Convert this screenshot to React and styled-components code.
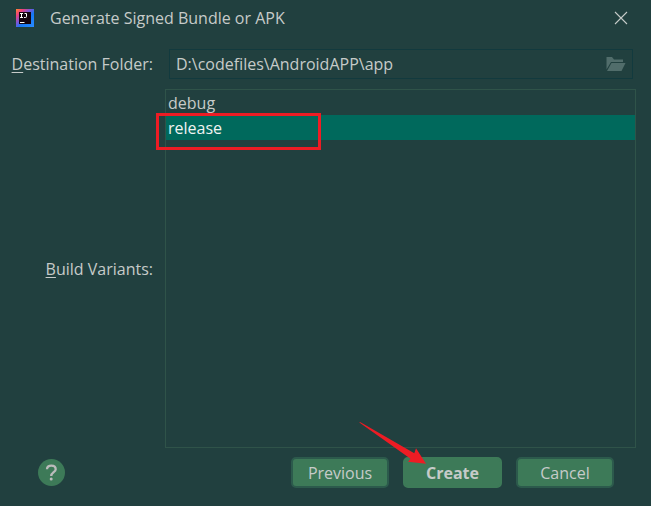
import { useState } from 'react';
import styled, { createGlobalStyle } from 'styled-components';

const GlobalStyle = createGlobalStyle`
	* {
		box-sizing: border-box;
	}

	body {
		margin: 0;
		background: #21403f;
	}

	body, button, input {
		font-family: "Open Sans", "Noto Sans", sans-serif;
		font-size: 16px;
		line-height: 24px;
		color: #c6cbc9;
	}
`;

const Dialog = styled.main`
	display: flex;
	flex-direction: column;
	min-height: 100vh;
`;

const TitleBar = styled.header`
	display: flex;
	align-items: center;
	height: 36px;
	padding: 0 20px 0 16px;

	h1 {
		flex: 1;
		margin: 0 0 0 16px;
		font-size: 16px;
		font-weight: 400;
	}
`;

const IconButton = styled.button`
	display: flex;
	align-items: center;
	justify-content: center;
	padding: 0;
	border: 0;
	background: none;
	cursor: pointer;
`;

const Form = styled.div`
	flex: 1;
	display: grid;
	grid-template-columns: 138px 1fr;
	grid-template-rows: 30px 1fr;
	gap: 10px 12px;
	align-items: center;
	padding: 13px 15px 9px;
`;

const Label = styled.label`
	justify-self: end;
	white-space: nowrap;

	u {
		text-underline-offset: 2px;
		text-decoration-skip-ink: none;
	}
`;

const PathField = styled.div`
	display: flex;
	height: 30px;
	margin: 0 3px 0 4px;
	padding: 0 6px 0 5px;
	border: 1px solid #123a3e;

	input {
		flex: 1;
		min-width: 0;
		padding: 0 1px;
		border: 0;
		outline: 0;
		background: none;
	}
`;

const VariantList = styled.ul`
	align-self: stretch;
	margin: 0;
	padding: 0;
	border: 1px solid #2f5349;
	list-style: none;
`;

const Variant = styled.li`
	position: relative;
	height: 25px;
	padding: 0 2px;
	line-height: 26px;
	color: ${(props) => (props.$selected ? '#f0f4f2' : 'inherit')};
	background: ${(props) => (props.$selected ? '#00695c' : 'none')};
	cursor: default;
`;

const Highlight = styled.span`
	position: absolute;
	top: -2px;
	left: -10px;
	width: 165px;
	height: 37px;
	border: 3px solid #ed1c24;
	pointer-events: none;
`;

const Footer = styled.footer`
	display: flex;
	align-items: center;
	gap: 14px;
	padding: 0 37px 18px 38px;
`;

const HelpButton = styled(IconButton)`
	margin-right: auto;
`;

const Button = styled.button`
	position: relative;
	width: ${(props) => (props.$primary ? 99 : 98)}px;
	height: 31px;
	padding: 0;
	border: 2px solid ${(props) => (props.$primary ? '#3d7a58' : '#2c5a4c')};
	border-radius: 5px;
	background: #3d7a58;
	font-weight: ${(props) => (props.$primary ? 700 : 400)};
	cursor: pointer;
`;

const Arrow = styled.svg`
	position: absolute;
	top: -38px;
	left: -47px;
	pointer-events: none;
`;

function AppLogo() {
	return (
		<svg width="18" height="18" viewBox="0 0 18 18" aria-hidden="true">
			<defs>
				<linearGradient id="logo" x1="0" y1="0" x2="1" y2="1">
					<stop offset="0" stopColor="#ff8a2c" />
					<stop offset="0.2" stopColor="#f0407c" />
					<stop offset="0.42" stopColor="#7858d8" />
					<stop offset="0.6" stopColor="#1478f5" />
					<stop offset="1" stopColor="#2a8cff" />
				</linearGradient>
			</defs>
			<path d="M0 0H18V18H0Z" fill="url(#logo)" />
			<path d="M3 3H15V15H3Z" fill="#14040f" />
			<path
				d="M4 4.5H7M5.5 4.5V8.5M4 8.5H7M8.5 4.5H10.5V7.5Q10.5 8.5 9.5 8.5H8M4 13.5H8.5"
				fill="none"
				stroke="#fff"
			/>
		</svg>
	);
}

function CloseIcon() {
	return (
		<svg width="20" height="20" viewBox="0 0 20 20" aria-hidden="true">
			<path d="M4 4L16 16M16 4L4 16" stroke="#c6cbc9" strokeWidth="1.1" />
		</svg>
	);
}

function FolderIcon() {
	return (
		<svg width="20" height="16" viewBox="0 0 20 16" aria-hidden="true">
			<path d="M0.5 1H6L8 3.5H17V6H5L0.5 13.5Z" fill="#516d6b" />
			<path d="M5.5 7H19.5L15.5 15H1Z" fill="#516d6b" />
		</svg>
	);
}

function HelpIcon() {
	return (
		<svg width="27" height="27" viewBox="0 0 27 27" aria-hidden="true">
			<circle cx="13.5" cy="13.5" r="13.5" fill="#3d7a58" />
			<path
				d="M9 10.2C9 7.8 10.8 6.6 13.3 6.6S17.7 8 17.7 10.2C17.7 13 13.2 13.4 13.2 17"
				fill="none"
				stroke="#bcbcbc"
				strokeWidth="2.3"
			/>
			<circle cx="13.2" cy="19.9" r="1.5" fill="#bcbcbc" />
		</svg>
	);
}

const variants = ['debug', 'release'];

function App() {
	const [folder, setFolder] = useState('D:\\codefiles\\AndroidAPP\\app');
	const [selected, setSelected] = useState('release');

	return (
		<>
			<GlobalStyle />
			<Dialog>
				<TitleBar>
					<AppLogo />
					<h1>Generate Signed Bundle or APK</h1>
					<IconButton aria-label="Close">
						<CloseIcon />
					</IconButton>
				</TitleBar>
				<Form>
					<Label htmlFor="folder"><u>D</u>estination Folder:</Label>
					<PathField>
						<input
							id="folder"
							value={folder}
							onChange={(e) => setFolder(e.target.value)}
						/>
						<IconButton aria-label="Browse">
							<FolderIcon />
						</IconButton>
					</PathField>
					<Label as="span" id="variants"><u>B</u>uild Variants:</Label>
					<VariantList role="listbox" aria-labelledby="variants">
						{variants.map((name) => (
							<Variant
								key={name}
								role="option"
								tabIndex={0}
								aria-selected={name === selected}
								$selected={name === selected}
								onClick={() => setSelected(name)}
							>
								{name}
								{name === 'release' && <Highlight />}
							</Variant>
						))}
					</VariantList>
				</Form>
				<Footer>
					<HelpButton aria-label="Help">
						<HelpIcon />
					</HelpButton>
					<Button>Previous</Button>
					<Button $primary>
						Create
						<Arrow width="70" height="44" viewBox="0 0 70 44" aria-hidden="true">
							<path
								d="M1 1.3L2.5 1.3L56.3 32.3L58 27.3L68 42.7L50 40.7L52.5 37.7Z"
								fill="#ed1c24"
							/>
						</Arrow>
					</Button>
					<Button>Cancel</Button>
				</Footer>
			</Dialog>
		</>
	);
}

export default App;
